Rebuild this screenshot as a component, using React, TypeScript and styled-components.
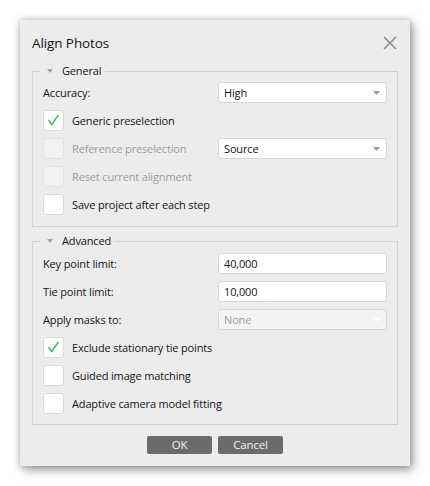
import React from "react";
import styled, { createGlobalStyle } from "styled-components";

const GlobalStyle = createGlobalStyle`
  html, body { margin: 0; padding: 0; background: #ffffff; }
  body {
    font-family: "Open Sans", "Noto Sans", sans-serif;
    font-size: 11px;
    letter-spacing: -0.15px;
    color: #111;
  }
`;

const Page = styled.div`
  width: 430px;
  height: 486px;
  box-sizing: border-box;
  padding: 20px 0 0 20px;
`;

const Dialog = styled.div`
  width: 390px;
  height: 446px;
  box-sizing: border-box;
  background: #ececec;
  box-shadow: 0 0 6px rgba(0, 0, 0, 0.25), 3px 4px 10px rgba(0, 0, 0, 0.35);
  padding: 13px 12px 12px 12px;
  display: flex;
  flex-direction: column;
`;

const TitleBar = styled.div`
  display: flex;
  align-items: center;
  justify-content: space-between;
  height: 20px;
`;

const Title = styled.div`
  font-size: 13.5px;
  letter-spacing: -0.1px;
  color: #141414;
  line-height: 20px;
`;

const CloseButton = styled.div`
  width: 16px;
  height: 16px;
  display: flex;
  align-items: center;
  justify-content: center;
`;

const Group = styled.fieldset<{ $pt: number; $pb: number; $mt: number }>`
  margin: ${(p) => p.$mt}px 0 0 0;
  border: 1px solid #d3d3d3;
  padding: ${(p) => p.$pt}px 10px ${(p) => p.$pb}px 10px;
  min-width: 0;
  display: flex;
  flex-direction: column;
  gap: 7px;
`;

const Legend = styled.legend`
  margin-left: -3px;
  padding: 0 4px 0 7px;
  height: 16px;
  line-height: 16px;
  display: flex;
  align-items: center;
  gap: 9px;
  color: #141414;
`;

const Row = styled.div`
  display: grid;
  grid-template-columns: 175px 1fr;
  align-items: center;
  height: 21px;
`;

const Label = styled.span<{ $disabled?: boolean }>`
  color: ${(p) => (p.$disabled ? "#9c9c9c" : "#141414")};
  white-space: nowrap;
`;

const Field = styled.div<{ $disabled?: boolean }>`
  height: 21px;
  box-sizing: border-box;
  border: 1px solid #d6d6d6;
  border-radius: 3px;
  background: ${(p) => (p.$disabled ? "#f4f4f4" : "#ffffff")};
  color: ${(p) => (p.$disabled ? "#9c9c9c" : "#141414")};
  display: flex;
  align-items: center;
  justify-content: space-between;
  padding: 0 6px 0 5px;
`;

const CheckRow = styled.div`
  display: flex;
  align-items: center;
  gap: 8px;
  height: 21px;
`;

const Box = styled.span<{ $disabled?: boolean }>`
  width: 21px;
  height: 21px;
  box-sizing: border-box;
  border: 1px solid ${(p) => (p.$disabled ? "#e2e2e2" : "#d9d9d9")};
  border-radius: 3px;
  background: ${(p) => (p.$disabled ? "#f1f1f1" : "#ffffff")};
  display: flex;
  align-items: center;
  justify-content: center;
  flex-shrink: 0;
`;

const ButtonBar = styled.div`
  display: flex;
  justify-content: center;
  gap: 6px;
  margin-top: 11px;
`;

const Button = styled.button`
  width: 65px;
  height: 18px;
  border: none;
  border-radius: 2px;
  background: #6b6b6b;
  color: #f2f2f2;
  font-family: inherit;
  font-size: 11.5px;
  letter-spacing: inherit;
  padding: 0;
  line-height: 18px;
`;

const Arrow = ({ color }: { color: string }) => (
  <svg width="7" height="4" viewBox="0 0 7 4">
    <polygon points="0,0 7,0 3.5,4" fill={color} />
  </svg>
);

const Check = () => (
  <svg width="21" height="21" viewBox="0 0 21 21" style={{ display: "block" }}>
    <polyline
      points="5.5,10.5 8.5,15 15.5,5"
      fill="none"
      stroke="#36c54a"
      strokeWidth="1.7"
      strokeLinecap="round"
      strokeLinejoin="round"
    />
  </svg>
);

const Combo = ({ value, disabled }: { value: string; disabled?: boolean }) => (
  <Field $disabled={disabled}>
    <span>{value}</span>
    <Arrow color={disabled ? "#ffffff" : "#9a9a9a"} />
  </Field>
);

const Checkbox = ({
  label,
  checked,
  disabled,
}: {
  label: string;
  checked?: boolean;
  disabled?: boolean;
}) => (
  <CheckRow>
    <Box $disabled={disabled}>{checked && <Check />}</Box>
    <Label $disabled={disabled}>{label}</Label>
  </CheckRow>
);

const GroupTitle = ({ text }: { text: string }) => (
  <Legend>
    <svg width="6" height="4" viewBox="0 0 6 4">
      <polygon points="0,0 6,0 3,4" fill="#a3a3a3" />
    </svg>
    <span>{text}</span>
  </Legend>
);

export default function App() {
  return (
    <>
      <GlobalStyle />
      <Page>
        <Dialog>
          <TitleBar>
            <Title>Align Photos</Title>
            <CloseButton>
              <svg width="14" height="14" viewBox="0 0 14 14">
                <path d="M1 1 L13 13 M13 1 L1 13" stroke="#8c8c8c" strokeWidth="1.6" />
              </svg>
            </CloseButton>
          </TitleBar>

          <Group $mt={10} $pt={3} $pb={11}>
            <GroupTitle text="General" />
            <Row>
              <Label>Accuracy:</Label>
              <Combo value="High" />
            </Row>
            <Checkbox label="Generic preselection" checked />
            <Row>
              <Checkbox label="Reference preselection" disabled />
              <Combo value="Source" />
            </Row>
            <Checkbox label="Reset current alignment" disabled />
            <Checkbox label="Save project after each step" />
          </Group>

          <Group $mt={6} $pt={4} $pb={10}>
            <GroupTitle text="Advanced" />
            <Row>
              <Label>Key point limit:</Label>
              <Field>40,000</Field>
            </Row>
            <Row>
              <Label>Tie point limit:</Label>
              <Field>10,000</Field>
            </Row>
            <Row>
              <Label>Apply masks to:</Label>
              <Combo value="None" disabled />
            </Row>
            <Checkbox label="Exclude stationary tie points" checked />
            <Checkbox label="Guided image matching" />
            <Checkbox label="Adaptive camera model fitting" />
          </Group>

          <ButtonBar>
            <Button>OK</Button>
            <Button>Cancel</Button>
          </ButtonBar>
        </Dialog>
      </Page>
    </>
  );
}
